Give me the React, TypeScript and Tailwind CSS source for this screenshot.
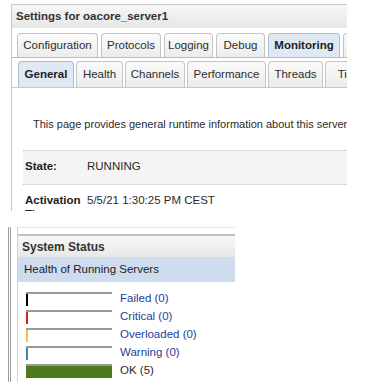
import type { ReactNode } from 'react'

// Settings panel (top) + System Status portlet (bottom)

const font = "font-['Liberation_Sans',Arial,sans-serif]"

type Tab = { label: string; w: string; active?: boolean }

const mainTabs: Tab[] = [
  { label: 'Configuration', w: 'w-[81px]' },
  { label: 'Protocols', w: 'w-[60px]' },
  { label: 'Logging', w: 'w-[49px]' },
  { label: 'Debug', w: 'w-[49px]' },
  { label: 'Monitoring', w: 'w-[72px]', active: true },
  { label: 'Time', w: 'w-[60px]' },
]

const subTabs: Tab[] = [
  { label: 'General', w: 'w-[56px]', active: true },
  { label: 'Health', w: 'w-[47px]' },
  { label: 'Channels', w: 'w-[60px]' },
  { label: 'Performance', w: 'w-[79px]' },
  { label: 'Threads', w: 'w-[55px]' },
  { label: 'Timers', w: 'w-[60px]' },
]

function TabButton({ tab, h }: { tab: Tab; h: string }) {
  return (
    <div
      className={`${tab.w} ${h} shrink-0 flex items-center justify-center rounded-t-[4px] border border-b-0 text-[11.5px] whitespace-nowrap overflow-hidden ${
        tab.active
          ? 'border-[#a9bdd3] bg-[#dfe9f4] font-bold text-[#1e1e1e]'
          : 'border-[#c4c4c4] bg-linear-to-b from-[#fbfbfb] to-[#ececec] text-[#2e2e2e]'
      }`}
    >
      {tab.label}
    </div>
  )
}

function StatusBar({ color, label, full }: { color: string; label: ReactNode; full?: boolean }) {
  return (
    <div className="flex items-center h-[18px]">
      <div className={`w-[86px] h-[14px] border-t-2 border-[#9a9a9a] flex ${full ? 'bg-[#4e7a1e]' : 'bg-white'}`}>
        {!full && <div className={`w-[2px] h-full ${color}`} />}
      </div>
      <span className="ml-[8px] text-[11.5px] text-[#23419a] leading-none">{label}</span>
    </div>
  )
}

export default function App() {
  return (
    <div className={`w-[366px] h-[382px] bg-white overflow-hidden flex flex-col ${font}`}>
      {/* Settings panel */}
      <div className="ml-[11px] mt-[4px] w-[336px] h-[207px] shrink-0 border-l border-t border-[#c8c8c8] overflow-hidden flex flex-col">
        <div className="h-[23px] shrink-0 flex items-center pl-[4px] bg-linear-to-b from-[#f7f7f7] to-[#e6e6e6] text-[11.5px] font-bold text-[#333]">
          Settings for oacore_server1
        </div>

        <div className="mt-[5px] h-[24px] shrink-0 flex items-end gap-[3px] pl-[5px]">
          {mainTabs.map((t) => (
            <TabButton key={t.label} tab={t} h="h-[24px]" />
          ))}
        </div>

        <div className="h-[31px] shrink-0 border-t border-[#a9bdd3] flex">
          <div className="w-[3px] h-full bg-[#8ea8c6]" />
          <div className="flex-1 flex items-end gap-[2px] pl-[6px] border-b border-[#c8c8c8]">
            {subTabs.map((t) => (
              <TabButton key={t.label} tab={t} h="h-[26px]" />
            ))}
          </div>
        </div>

        <div className="pl-[21px] mt-[28px] text-[11px] text-[#2b2b2b] whitespace-nowrap">
          This page provides general runtime information about this server
        </div>

        <div className="ml-[11px] mt-[17px] h-[35px] shrink-0 flex items-center border-y border-dotted border-[#c4c4c4] bg-[#f4f4f4] text-[11.5px]">
          <span className="w-[64px] pl-[2px] font-bold text-[#1e1e1e]">State:</span>
          <span className="text-[#2b2b2b]">RUNNING</span>
        </div>

        <div className="ml-[11px] mt-[8px] flex text-[11.5px] leading-[14px]">
          <span className="w-[64px] pl-[2px] font-bold text-[#1e1e1e]">
            Activation
            <br />
            Time:
          </span>
          <span className="text-[#2b2b2b]">5/5/21 1:30:25 PM CEST</span>
        </div>
      </div>

      {/* System Status portlet */}
      <div className="mt-[16px] flex flex-1">
        <div className="ml-[8px] w-[3px] border-x border-[#9c9c9c]" />
        <div className="ml-[6px] w-[218px] flex flex-col border-l border-[#d2d2d2]">
          <div className="h-[7px] shrink-0 border-t border-[#e4e4e4]" />
          <div className="h-[23px] shrink-0 border-t-2 border-[#c2c2c2] bg-linear-to-b from-[#f8f8f8] to-[#e7e7e7] flex items-center pl-[4px] text-[12px] font-bold text-[#333]">
            System Status
          </div>
          <div className="h-[25px] shrink-0 bg-[#cedcee] flex items-center pl-[6px] text-[11.5px] text-[#222]">
            Health of Running Servers
          </div>
          <div className="mt-[8px] pl-[8px] flex flex-col">
            <StatusBar color="bg-black" label="Failed (0)" />
            <StatusBar color="bg-[#d42020]" label="Critical (0)" />
            <StatusBar color="bg-[#f0c040]" label="Overloaded (0)" />
            <StatusBar color="bg-[#3a8ab0]" label="Warning (0)" />
            <StatusBar color="" label={<span className="text-[#2b2b2b]">OK (5)</span>} full />
          </div>
        </div>
      </div>
    </div>
  )
}
